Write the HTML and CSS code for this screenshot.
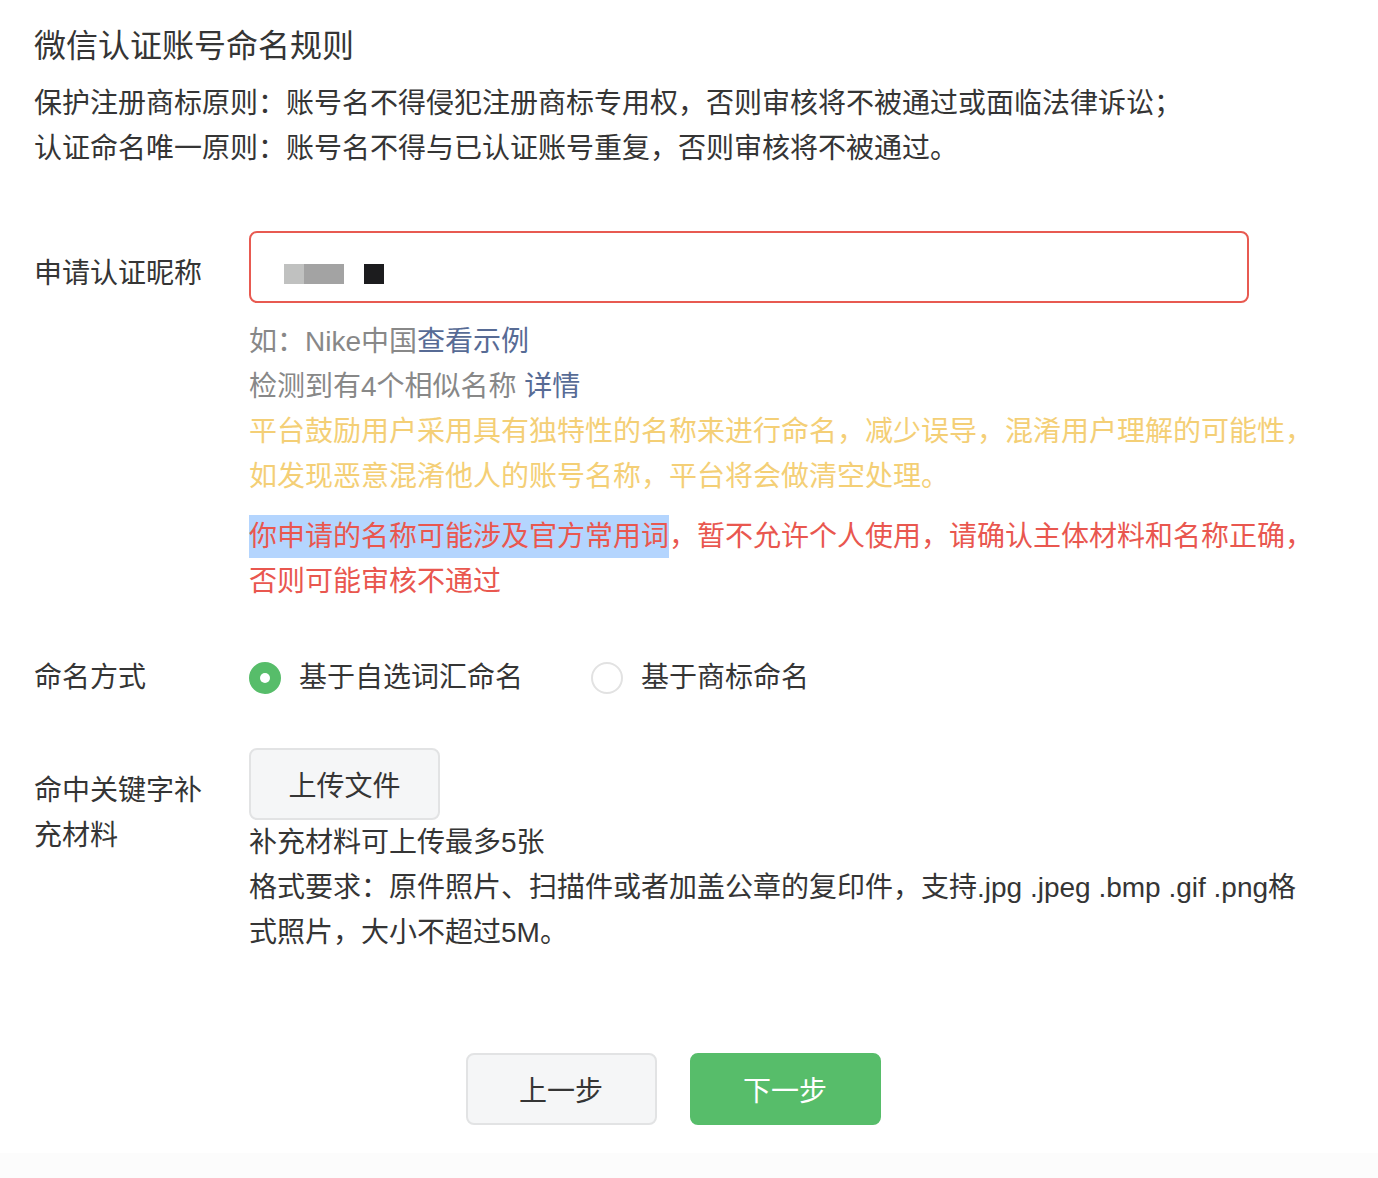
FILE: index.html
```html
<html>

<head>
    <meta name="viewport" content="width=device-width, initial-scale=1.0">
    <title>微信认证账号命名</title>
    <link rel="stylesheet" href="styles.css">
</head>

<body>
    <div class="page">
        <div class="rules">
            <h2 class="rules-title">微信认证账号命名规则</h2>
            <p class="rule">保护注册商标原则：账号名不得侵犯注册商标专用权，否则审核将不被通过或面临法律诉讼；</p>
            <p class="rule">认证命名唯一原则：账号名不得与已认证账号重复，否则审核将不被通过。</p>
        </div>

        <div class="form-row row-name">
            <label class="form-label">申请认证昵称</label>
            <div class="form-field">
                <div class="name-input">
                    <span class="blur blur-light"></span><span class="blur blur-dark"></span><span class="blur blur-black"></span>
                </div>
                <p class="hint">如：Nike中国<a class="link">查看示例</a></p>
                <p class="hint">检测到有4个相似名称 <a class="link">详情</a></p>
                <p class="warn">平台鼓励用户采用具有独特性的名称来进行命名，减少误导，混淆用户理解的可能性，<br>如发现恶意混淆他人的账号名称，平台将会做清空处理。</p>
                <p class="error"><span class="selected">你申请的名称可能涉及官方常用词</span>，暂不允许个人使用，请确认主体材料和名称正确，<br>否则可能审核不通过</p>
            </div>
        </div>

        <div class="form-row row-type">
            <label class="form-label">命名方式</label>
            <div class="form-field radios">
                <span class="radio checked"><i class="radio-dot"></i>基于自选词汇命名</span>
                <span class="radio"><i class="radio-dot"></i>基于商标命名</span>
            </div>
        </div>

        <div class="form-row row-upload">
            <label class="form-label">命中关键字补充材料</label>
            <div class="form-field">
                <button class="btn btn-default btn-upload">上传文件</button>
                <p class="desc">补充材料可上传最多5张</p>
                <p class="desc">格式要求：原件照片、扫描件或者加盖公章的复印件，支持.jpg .jpeg .bmp .gif .png格<br>式照片，大小不超过5M。</p>
            </div>
        </div>

        <div class="actions">
            <button class="btn btn-default">上一步</button>
            <button class="btn btn-primary">下一步</button>
        </div>
    </div>
    <div class="bottom-bar"></div>
</body>

</html>
```

FILE: styles.css
```css
body {
    margin: 0;
    background-color: #fff;
    font-family: "Liberation Sans", "Noto Sans CJK SC", sans-serif;
    font-size: 28px;
    color: #353535;
}

p {
    margin: 0;
}

.page {
    padding: 24px 20px 0 34px;
}

.rules-title {
    margin: 0;
    font-size: 32px;
    font-weight: normal;
    line-height: 45px;
    color: #353535;
}

.rule {
    line-height: 45px;
}

.rules-title + .rule {
    margin-top: 12px;
}

.form-row {
    display: flex;
    align-items: flex-start;
}

.form-label {
    width: 180px;
    margin-right: 35px;
    padding-top: 20px;
    line-height: 45px;
    flex-shrink: 0;
}

.form-field {
    flex: 1;
}

.row-name {
    margin-top: 60px;
}

.name-input {
    box-sizing: border-box;
    width: 1000px;
    height: 72px;
    border: 2px solid #e85a51;
    border-radius: 8px;
    padding: 14px 0 0 33px;
    display: flex;
    align-items: center;
}

.blur {
    display: inline-block;
    height: 20px;
}

.blur-light {
    width: 20px;
    background-color: #c0c1c0;
}

.blur-dark {
    width: 40px;
    background-color: #a3a3a3;
}

.blur-black {
    width: 20px;
    margin-left: 20px;
    background-color: #1c1c1e;
}

.hint {
    line-height: 45px;
    color: #888;
}

.name-input + .hint {
    margin-top: 16px;
}

.link {
    color: #576b95;
    text-decoration: none;
    cursor: pointer;
}

.warn {
    line-height: 45px;
    color: #f4cf76;
}

.error {
    margin-top: 15px;
    line-height: 45px;
    color: #e9574f;
}

.selected {
    display: inline-block;
    height: 43px;
    line-height: 43px;
    vertical-align: top;
    margin-top: 1px;
    background-color: #b4d5fe;
}

.row-type {
    margin-top: 51px;
}

.row-type .form-label {
    padding-top: 0;
}

.radios {
    display: flex;
    align-items: center;
    height: 45px;
}

.radio {
    display: flex;
    align-items: center;
    margin-right: 68px;
    line-height: 45px;
    cursor: pointer;
}

.radio-dot {
    box-sizing: border-box;
    width: 32px;
    height: 32px;
    margin-right: 18px;
    border: 2px solid #e2e2e2;
    border-radius: 50%;
    background-color: #fff;
    position: relative;
}

.radio.checked .radio-dot {
    border-color: #57bd6a;
    background-color: #57bd6a;
}

.radio.checked .radio-dot::after {
    content: "";
    position: absolute;
    left: 9px;
    top: 9px;
    width: 10px;
    height: 10px;
    border-radius: 50%;
    background-color: #fff;
}

.row-upload {
    margin-top: 48px;
}

.desc {
    line-height: 45px;
}

.btn {
    box-sizing: border-box;
    width: 191px;
    height: 72px;
    border-radius: 8px;
    font-family: "Liberation Sans", "Noto Sans CJK SC", sans-serif;
    font-size: 28px;
    cursor: pointer;
}

.btn-default {
    background-color: #f5f6f7;
    border: 2px solid #e2e3e4;
    color: #353535;
}

.btn-primary {
    background-color: #57bd6a;
    border: 2px solid #57bd6a;
    color: #fff;
}

.btn-upload {
    display: block;
}

.actions {
    display: flex;
    justify-content: center;
    gap: 33px;
    margin-top: 98px;
    margin-right: 46px;
}

.bottom-bar {
    margin-top: 28px;
    height: 40px;
    background-color: #fcfcfc;
}
```
